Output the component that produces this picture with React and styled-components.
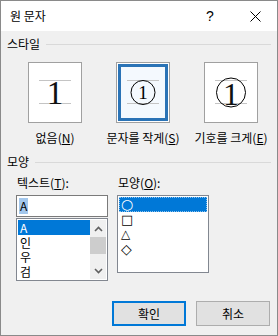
import React from 'react';
import styled, { createGlobalStyle } from 'styled-components';

const Global = createGlobalStyle`
  html, body { margin: 0; padding: 0; background: #ffffff; }
  body {
    font-family: "Noto Sans CJK KR", "Noto Sans", sans-serif;
    font-size: 12px;
    color: #000;
  }
`;

const Window = styled.div`
  width: 278px;
  height: 336px;
  box-sizing: border-box;
  border: 1px solid #8a8a8a;
  background: #f0f0f0;
  display: flex;
  flex-direction: column;
`;

const TitleBar = styled.div`
  height: 30px;
  flex: none;
  background: #ffffff;
  display: flex;
  align-items: center;
  padding-left: 9px;
`;

const Title = styled.div`
  flex: 1;
  font-size: 12px;
  line-height: 14px;
`;

const CaptionButton = styled.div`
  width: ${p => p.$w}px;
  height: 30px;
  display: flex;
  align-items: center;
  justify-content: center;
  font-size: 14px;
  font-family: "Liberation Sans", sans-serif;
`;

const Body = styled.div`
  flex: 1;
  display: flex;
  flex-direction: column;
  padding: 0 6px;
`;

const GroupHeader = styled.div`
  display: flex;
  align-items: center;
  gap: 6px;
  height: 14px;
  line-height: 14px;
  margin-top: ${p => p.$top}px;
  &::after {
    content: '';
    flex: 1;
    height: 1px;
    background: #d9d9d9;
  }
`;

const StyleGrid = styled.div`
  display: grid;
  grid-template-columns: repeat(3, 88px);
  margin: 11px 0 0 4px;
`;

const Option = styled.div`
  display: flex;
  flex-direction: column;
  align-items: center;
`;

const PreviewBox = styled.div`
  width: 54px;
  height: 61px;
  box-sizing: border-box;
  border: 1px solid #a0a0a0;
  background: #ffffff;
  padding: 1px;
  display: flex;
`;

const PreviewInner = styled.div`
  flex: 1;
  display: flex;
  align-items: center;
  justify-content: center;
  border: 3px solid ${p => (p.$selected ? '#2a73b6' : 'transparent')};
  background: ${p => (p.$selected ? '#f4f9fe' : '#ffffff')};
`;

const OptionLabel = styled.div`
  margin-top: 7px;
  line-height: 16px;
  white-space: nowrap;
`;

const U = styled.span`
  text-decoration: underline;
`;

const Form = styled.div`
  display: flex;
  gap: 9px;
  margin: 7px 0 0 9px;
`;

const Column = styled.div`
  width: 92px;
  display: flex;
  flex-direction: column;
`;

const FieldLabel = styled.div`
  line-height: 14px;
  padding-left: 1px;
  margin-bottom: 5px;
  white-space: nowrap;
`;

const TextInput = styled.div`
  height: 22px;
  box-sizing: border-box;
  border: 1px solid #7a7a7a;
  background: #ffffff;
  display: flex;
  align-items: center;
  padding-left: 2px;
`;

const Selection = styled.span`
  background: #a3c7ec;
  line-height: 16px;
  padding: 0 1px;
`;

const ListBox = styled.div`
  height: ${p => p.$h}px;
  margin-top: ${p => p.$mt || 0}px;
  box-sizing: border-box;
  border: 1px solid #828790;
  background: #ffffff;
  padding: 1px;
  display: flex;
`;

const Items = styled.div`
  flex: 1;
  display: flex;
  flex-direction: column;
`;

const Item = styled.div`
  height: 15px;
  line-height: 13px;
  box-sizing: border-box;
  padding-left: ${p => p.$pl || 1}px;
  background: ${p => (p.$selected ? '#0078d7' : 'transparent')};
  color: ${p => (p.$selected ? '#ffffff' : '#000000')};
  border: 1px dotted ${p => (p.$focus ? 'rgba(255,255,255,0.55)' : 'transparent')};
  display: flex;
  align-items: center;
  overflow: hidden;
`;

const ShapeGlyph = styled.span`
  font-family: "DejaVu Sans", sans-serif;
  font-size: ${p => p.$size || 11}px;
  line-height: 13px;
`;

const ScrollBar = styled.div`
  width: 16px;
  background: #f0f0f0;
  display: flex;
  flex-direction: column;
`;

const ScrollArrow = styled.div`
  height: 17px;
  display: flex;
  align-items: center;
  justify-content: center;
`;

const ScrollTrack = styled.div`
  flex: 1;
`;

const Thumb = styled.div`
  height: 17px;
  background: #cdcdcd;
`;

const Buttons = styled.div`
  display: flex;
  justify-content: flex-end;
  gap: 10px;
  margin: 20px 1px 0 0;
`;

const Button = styled.div`
  width: 74px;
  height: 25px;
  box-sizing: border-box;
  background: #e1e1e1;
  border: ${p => (p.$primary ? '2px solid #0078d7' : '1px solid #adadad')};
  display: flex;
  align-items: center;
  justify-content: center;
  line-height: 14px;
`;

const Preview = ({ kind }) => (
  <svg width="40" height="45" viewBox="0 0 40 45">
    <line x1="4" y1="10.5" x2="36" y2="10.5" stroke="#c4c4c4" strokeWidth="1" />
    <line x1="4" y1="33.5" x2="36" y2="33.5" stroke="#c4c4c4" strokeWidth="1" />
    {kind === 'none' && (
      <text x="20" y="34" textAnchor="middle" fontFamily="Liberation Serif, serif" fontSize="33" fill="#111">1</text>
    )}
    {kind === 'small' && (
      <>
        <circle cx="20" cy="22.5" r="12" fill="none" stroke="#000" strokeWidth="1" />
        <text x="20" y="29" textAnchor="middle" fontFamily="Liberation Serif, serif" fontSize="19">1</text>
      </>
    )}
    {kind === 'big' && (
      <>
        <circle cx="20" cy="22.5" r="14.5" fill="none" stroke="#000" strokeWidth="1" />
        <text x="20" y="34.5" textAnchor="middle" fontFamily="Liberation Serif, serif" fontSize="32" fill="#111">1</text>
      </>
    )}
  </svg>
);

const Chevron = ({ up }) => (
  <svg width="9" height="6" viewBox="0 0 9 6">
    <path d={up ? 'M1 5 L4.5 1.5 L8 5' : 'M1 1 L4.5 4.5 L8 1'} fill="none" stroke="#606060" strokeWidth="1.6" />
  </svg>
);

const CloseIcon = () => (
  <svg width="11" height="11" viewBox="0 0 11 11">
    <path d="M0.5 0.5 L10.5 10.5 M10.5 0.5 L0.5 10.5" stroke="#000" strokeWidth="1" />
  </svg>
);

const options = [
  { kind: 'none', label: '없음(', key: 'N' },
  { kind: 'small', label: '문자를 작게(', key: 'S', selected: true },
  { kind: 'big', label: '기호를 크게(', key: 'E' },
];

const texts = ['A', '인', '우', '검'];
const shapes = [
  { g: '○', size: 14 },
  { g: '□', size: 13 },
  { g: '△', size: 12 },
  { g: '◇', size: 14 },
];

export default function App() {
  return (
    <>
      <Global />
      <Window>
        <TitleBar>
          <Title>원 문자</Title>
          <CaptionButton $w={46}>?</CaptionButton>
          <CaptionButton $w={44}><CloseIcon /></CaptionButton>
        </TitleBar>
        <Body>
          <GroupHeader $top={6}>스타일</GroupHeader>
          <StyleGrid>
            {options.map(o => (
              <Option key={o.kind}>
                <PreviewBox>
                  <PreviewInner $selected={o.selected}>
                    <Preview kind={o.kind} />
                  </PreviewInner>
                </PreviewBox>
                <OptionLabel>{o.label}<U>{o.key}</U>)</OptionLabel>
              </Option>
            ))}
          </StyleGrid>
          <GroupHeader $top={9}>모양</GroupHeader>
          <Form>
            <Column>
              <FieldLabel>텍스트(<U>T</U>):</FieldLabel>
              <TextInput><Selection>A</Selection></TextInput>
              <ListBox $h={63} $mt={1}>
                <Items>
                  {texts.map((t, i) => (
                    <Item key={t} $selected={i === 0}>{t}</Item>
                  ))}
                </Items>
                <ScrollBar>
                  <ScrollArrow><Chevron up /></ScrollArrow>
                  <Thumb />
                  <ScrollTrack />
                  <ScrollArrow><Chevron /></ScrollArrow>
                </ScrollBar>
              </ListBox>
            </Column>
            <Column>
              <FieldLabel>모양(<U>O</U>):</FieldLabel>
              <ListBox $h={78}>
                <Items>
                  {shapes.map((s, i) => (
                    <Item key={s.g} $selected={i === 0} $focus={i === 0} $pl={1}>
                      <ShapeGlyph $size={s.size}>{s.g}</ShapeGlyph>
                    </Item>
                  ))}
                </Items>
              </ListBox>
            </Column>
          </Form>
          <Buttons>
            <Button $primary>확인</Button>
            <Button>취소</Button>
          </Buttons>
        </Body>
      </Window>
    </>
  );
}
